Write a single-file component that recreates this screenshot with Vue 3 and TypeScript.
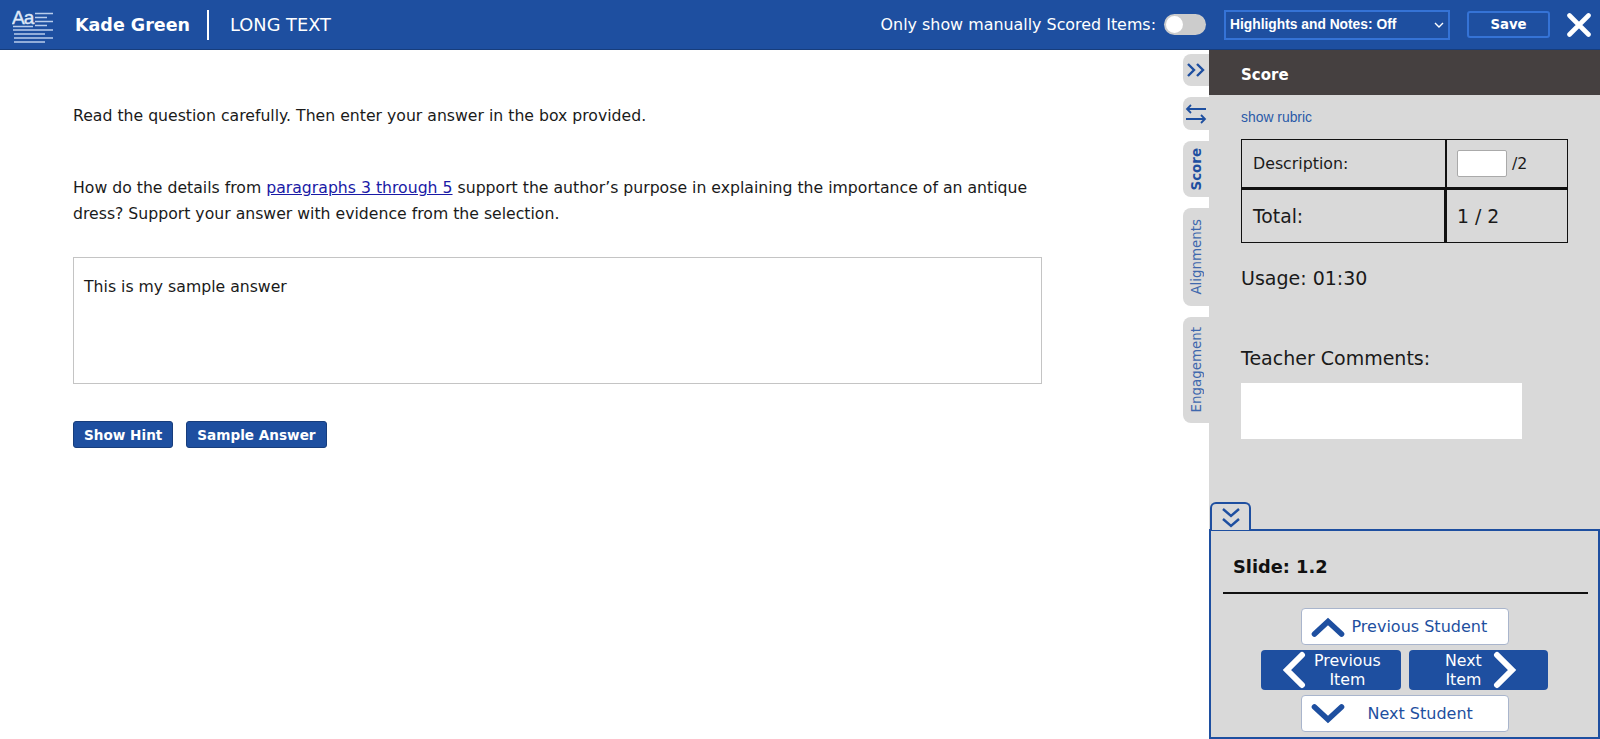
<template>
  <div class="page">
    <header class="topbar">
      <div class="topbar__left">
        <svg class="logo" width="44" height="40" viewBox="0 0 44 40" fill="none">
          <text x="0" y="19" class="logo__text">Aa</text>
          <g stroke="#b9cdec" stroke-width="1.6">
            <path d="M1 21.5H21M23 8.5H41M23 12.5H35M23 16.5H41M23 20.5H35" />
            <path d="M1 25H41M2 29H33M2 33H41M2 37H33" />
          </g>
        </svg>
        <span class="student">Kade Green</span>
        <span class="divider"></span>
        <span class="item-type">LONG TEXT</span>
      </div>
      <div class="topbar__right">
        <span class="manual-label">Only show manually Scored Items:</span>
        <span class="toggle"><span class="toggle__knob"></span></span>
        <div class="select">
          <span>Highlights and Notes: Off</span>
          <svg width="10" height="6" viewBox="0 0 10 6" fill="none">
            <path d="M1 1l4 4 4-4" stroke="#fff" stroke-width="1.4" />
          </svg>
        </div>
        <button class="save">Save</button>
        <svg class="close" width="24" height="24" viewBox="0 0 24 24" fill="none">
          <path d="M2.5 2.5L21.5 21.5M21.5 2.5L2.5 21.5" stroke="#fff" stroke-width="4.6" stroke-linecap="round" />
        </svg>
      </div>
    </header>

    <div class="body">
      <main class="content">
        <p class="intro">Read the question carefully. Then enter your answer in the box provided.</p>
        <p class="question">
          How do the details from <a class="link">paragraphs 3 through 5</a> support the author’s purpose in explaining the importance of an antique<br />dress? Support your answer with evidence from the selection.
        </p>
        <div class="answer">This is my sample answer</div>
        <div class="actions">
          <button class="action">Show Hint</button>
          <button class="action">Sample Answer</button>
        </div>
      </main>

      <nav class="tabs">
        <div class="tab tab--icon">
          <svg width="20" height="14" viewBox="0 0 20 14" fill="none" stroke="#1e4fa0" stroke-width="2.4">
            <path d="M2 1l6 6-6 6M11 1l6 6-6 6" />
          </svg>
        </div>
        <div class="tab tab--swap">
          <svg width="22" height="20" viewBox="0 0 22 20" fill="none" stroke="#1e4fa0" stroke-width="1.8">
            <path d="M21 5H2M6 1L2 5l4 4M1 15h19M16 11l4 4-4 4" />
          </svg>
        </div>
        <div
          v-for="tab in tabs"
          :key="tab.name"
          class="tab tab--text"
          :class="[{ 'tab--active': tab.active }, 'tab--' + tab.name.toLowerCase()]"
        >
          <span>{{ tab.name }}</span>
        </div>
      </nav>

      <aside class="panel">
        <div class="panel__title">Score</div>
        <div class="panel__body">
          <a class="rubric">show rubric</a>
          <div class="score-table">
            <div class="cell cell--label">Description:</div>
            <div class="cell cell--value"><span class="score-input"></span><span>/2</span></div>
            <div class="cell cell--label cell--total">Total:</div>
            <div class="cell cell--total">1 / 2</div>
          </div>
          <div class="usage">Usage: 01:30</div>
          <div class="comments-label">Teacher Comments:</div>
          <div class="comments"></div>
        </div>

        <section class="nav-box">
          <div class="nav-box__toggle">
            <svg width="20" height="24" viewBox="0 0 20 24" fill="none" stroke="#1e4fa0" stroke-width="2.4">
              <path d="M2 2l8 7 8-7M2 12l8 7 8-7" />
            </svg>
          </div>
          <div class="slide">Slide: 1.2</div>
          <div class="nav-buttons">
            <button class="student-btn student-btn--prev">
              <svg width="34" height="22" viewBox="0 0 34 22" fill="none">
                <path d="M3.5 18L17 5.5 30.5 18" stroke="#1e4fa0" stroke-width="5.6" stroke-linecap="round" />
              </svg>
              <span>Previous Student</span>
            </button>
            <div class="item-row">
              <button class="item-btn item-btn--prev">
                <svg width="24" height="38" viewBox="0 0 24 38" fill="none">
                  <path d="M20 4L5 19l15 15" stroke="#fff" stroke-width="6" stroke-linecap="round" />
                </svg>
                <span>Previous<br />Item</span>
              </button>
              <button class="item-btn item-btn--next">
                <span>Next<br />Item</span>
                <svg width="24" height="38" viewBox="0 0 24 38" fill="none">
                  <path d="M4 4l15 15L4 34" stroke="#fff" stroke-width="6" stroke-linecap="round" />
                </svg>
              </button>
            </div>
            <button class="student-btn student-btn--next">
              <svg width="34" height="22" viewBox="0 0 34 22" fill="none">
                <path d="M3.5 4L17 16.5 30.5 4" stroke="#1e4fa0" stroke-width="5.6" stroke-linecap="round" />
              </svg>
              <span>Next Student</span>
            </button>
          </div>
        </section>
      </aside>
    </div>
  </div>
</template>

<script setup lang="ts">
interface SideTab {
  name: string;
  active?: boolean;
}

const tabs: SideTab[] = [
  { name: 'Score', active: true },
  { name: 'Alignments' },
  { name: 'Engagement' }
];
</script>

<style>
html,
body {
  margin: 0;
  background: #fff;
}
</style>

<style scoped>
.page {
  width: 1600px;
  height: 739px;
  display: flex;
  flex-direction: column;
  overflow: hidden;
  font-family: "DejaVu Sans", Verdana, sans-serif;
  color: #1a1a1a;
}

/* Top bar */
.topbar {
  height: 49px;
  flex: none;
  background: #1e4fa0;
  border-bottom: 1px solid #173d7c;
  display: flex;
  align-items: center;
  justify-content: space-between;
  color: #fff;
}

.topbar__left {
  display: flex;
  align-items: center;
  padding-left: 12px;
}

.logo {
  margin-right: 19px;
}

.logo__text {
  font-family: "Liberation Sans", sans-serif;
  font-size: 19px;
  fill: #dfe8f7;
  stroke: #dfe8f7;
  stroke-width: 0.4px;
  letter-spacing: -1px;
}

.student {
  font-size: 17.5px;
  font-weight: 700;
}

.divider {
  width: 2px;
  height: 30px;
  background: #fff;
  margin: 0 21px 0 17px;
}

.item-type {
  font-size: 17.8px;
}

.topbar__right {
  display: flex;
  align-items: center;
}

.manual-label {
  font-size: 15.9px;
}

.toggle {
  width: 42px;
  height: 21px;
  margin-left: 8px;
  border-radius: 11px;
  background: #ccc;
  display: flex;
  align-items: center;
  padding-left: 2px;
  box-sizing: border-box;
}

.toggle__knob {
  width: 17px;
  height: 17px;
  border-radius: 50%;
  background: #fff;
}

.select {
  width: 226px;
  height: 30px;
  margin-left: 18px;
  box-sizing: border-box;
  border: 2px solid #3573d6;
  padding: 0 4px;
  display: flex;
  align-items: center;
  justify-content: space-between;
  font-family: "Liberation Sans", sans-serif;
  font-size: 13.8px;
  font-weight: 700;
}

.save {
  width: 83px;
  height: 27px;
  margin-left: 17px;
  background: #1e4fa0;
  border: 2px solid #3573d6;
  border-radius: 3px;
  color: #fff;
  font-family: "DejaVu Sans", sans-serif;
  font-size: 13.3px;
  font-weight: 700;
}

.close {
  margin: 0 9px 0 17px;
}

/* Main layout */
.body {
  flex: 1;
  min-height: 0;
  display: flex;
}

.content {
  flex: 1;
  min-width: 0;
  padding: 53px 0 0 73px;
  font-size: 15.7px;
  line-height: 26px;
}

.intro {
  margin: 0;
}

.question {
  margin: 46px 0 0;
  width: 969px;
}

.link {
  color: #1a1aa6;
  text-decoration: underline;
}

.answer {
  width: 969px;
  height: 127px;
  margin-top: 30px;
  box-sizing: border-box;
  border: 1px solid #c4c4c4;
  padding: 16px 10px;
}

.actions {
  display: flex;
  gap: 13px;
  margin-top: 37px;
}

.action {
  height: 27px;
  padding: 0 10px;
  background: #1e4fa0;
  border: 1px solid #173d7c;
  border-radius: 3px;
  color: #fff;
  font-family: "DejaVu Sans", sans-serif;
  font-size: 13.6px;
  font-weight: 700;
}

/* Side tabs */
.tabs {
  width: 26px;
  flex: none;
  display: flex;
  flex-direction: column;
  gap: 11px;
  padding-top: 4px;
}

.tab {
  width: 26px;
  background: #d9d9d9;
  border-radius: 8px 0 0 8px;
  display: flex;
  align-items: center;
  justify-content: center;
  color: #3f68ad;
  font-size: 13.4px;
}

.tab--icon {
  height: 32px;
}

.tab--swap {
  height: 33px;
}

.tab--text span {
  writing-mode: vertical-rl;
  transform: rotate(180deg);
}

.tab--active {
  color: #1e4fa0;
  font-weight: 700;
}

.tab--score {
  height: 56px;
}

.tab--alignments {
  height: 98px;
}

.tab--engagement {
  height: 106px;
}

/* Score panel */
.panel {
  width: 391px;
  flex: none;
  background: #d9d9d9;
  display: flex;
  flex-direction: column;
  justify-content: space-between;
}

.panel__title {
  height: 45px;
  flex: none;
  background: #454040;
  color: #fff;
  font-family: "DejaVu Sans", sans-serif;
  font-size: 15px;
  font-weight: 700;
  line-height: 51px;
  padding-left: 32px;
}

.panel__body {
  flex: 1;
  padding: 0 32px;
}

.rubric {
  display: block;
  margin-top: 14px;
  font-family: "Liberation Sans", sans-serif;
  font-size: 13.9px;
  color: #2a5aa8;
}

.score-table {
  display: grid;
  grid-template-columns: 205px 120px;
  grid-template-rows: 50px 52px;
  margin-top: 14px;
  width: 327px;
  border: 1px solid #111;
  box-sizing: border-box;
  font-size: 15.8px;
}

.cell {
  display: flex;
  align-items: center;
  padding-left: 10px;
  border-bottom: 3px solid #111;
}

.cell--label {
  padding-left: 11px;
  border-right: 2px solid #111;
}

.cell--total {
  font-size: 18.8px;
  border-bottom: 0;
}

.cell--label.cell--total {
  border-right-width: 3px;
}

.cell--value {
  gap: 5px;
}

.score-input {
  width: 48px;
  height: 25px;
  background: #fff;
  border: 1px solid #aaa;
  border-radius: 2px;
}

.usage {
  margin-top: 24px;
  font-size: 19px;
}

.comments-label {
  margin-top: 58px;
  font-size: 19px;
}

.comments {
  width: 281px;
  height: 56px;
  margin-top: 14px;
  background: #fff;
}

/* Slide navigation */
.nav-box {
  position: relative;
  height: 210px;
  flex: none;
  box-sizing: border-box;
  border: 2px solid #1e4fa0;
}

.nav-box__toggle {
  position: absolute;
  left: -1px;
  top: -29px;
  width: 41px;
  height: 28px;
  box-sizing: border-box;
  background: #d9d9d9;
  border: 2px solid #1e4fa0;
  border-bottom: 0;
  border-radius: 6px 6px 0 0;
  display: flex;
  justify-content: center;
  padding-top: 3px;
  overflow: hidden;
}

.slide {
  padding: 25px 0 0 22px;
  height: 51px;
  box-sizing: border-box;
  font-size: 17.8px;
  font-weight: 700;
  color: #111;
}

.nav-buttons {
  margin: 10px 10px 0 12px;
  padding: 14px 2px 0 0;
  border-top: 2px solid #111;
  display: flex;
  flex-direction: column;
  align-items: center;
  gap: 5px;
}

.student-btn {
  width: 208px;
  height: 37px;
  background: #fff;
  border: 1px solid #a9b5cc;
  border-radius: 4px;
  display: flex;
  align-items: center;
  color: #1e4fa0;
  font-family: "DejaVu Sans", sans-serif;
  font-size: 16px;
  padding: 0 0 0 9px;
}

.student-btn--prev span {
  margin-left: 7px;
}

.student-btn--next span {
  margin-left: 23px;
}

.item-row {
  display: flex;
  gap: 8px;
}

.item-btn {
  width: 139px;
  height: 40px;
  background: #1e4fa0;
  border: 0;
  border-radius: 4px;
  color: #fff;
  font-family: "DejaVu Sans", sans-serif;
  font-size: 15.8px;
  line-height: 19px;
  display: flex;
  align-items: center;
  padding: 0;
}

.item-btn--prev {
  width: 140px;
  padding-left: 21px;
  gap: 8px;
}

.item-btn--next {
  padding-left: 36px;
  gap: 11px;
}
</style>
